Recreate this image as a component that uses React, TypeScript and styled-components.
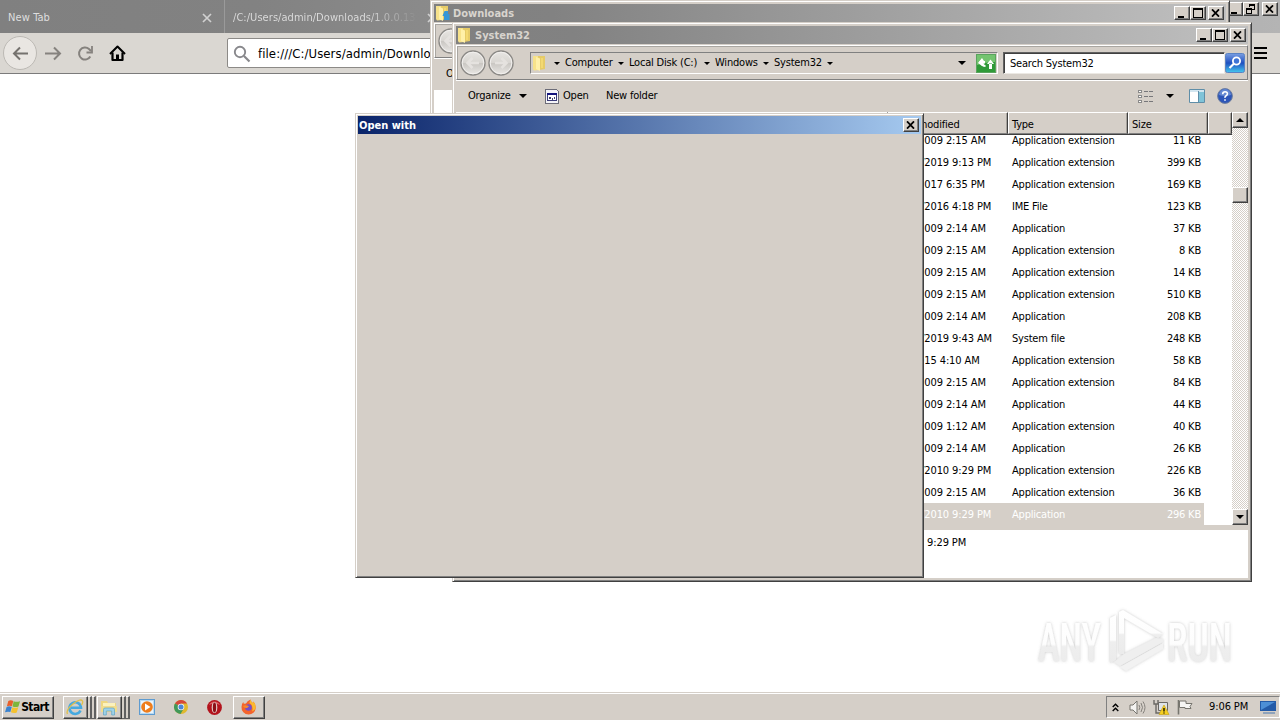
import { FC, ReactNode } from 'react';
import styled, { createGlobalStyle, css } from 'styled-components';

const face = '#d5cfc8';

const GlobalStyle = createGlobalStyle`
  * {
    box-sizing: border-box;
  }

  body {
    margin: 0;
    overflow: hidden;
    font-family: 'DejaVu Sans Condensed', 'DejaVu Sans', sans-serif;
    font-stretch: condensed;
    font-size: 11px;
    line-height: 14px;
    color: #000;
    background: #fff;
  }

  svg {
    display: block;
    flex: none;
  }
`;

const raised = css`
  border: 1px solid;
  border-color: #fff #404040 #404040 #fff;
  box-shadow: inset -1px -1px 0 #808080;
`;

const Desktop = styled.div`
  position: relative;
  display: flex;
  flex-direction: column;
  width: 1280px;
  height: 720px;
  overflow: hidden;
`;

const Label = styled.span<{ $w?: number; $ls?: number }>`
  flex: none;
  white-space: nowrap;
  width: ${({ $w }) => ($w ? `${$w}px` : 'auto')};
  letter-spacing: ${({ $ls = -0.2 }) => $ls}px;
`;

/* ---------- browser ---------- */

const TabStrip = styled.div`
  display: flex;
  height: 33px;
  flex: none;
  background: linear-gradient(90deg, #808080, #828282 20%, #b4b4b4);
`;

const Tab = styled.div<{ $w: number }>`
  display: flex;
  align-items: center;
  justify-content: space-between;
  width: ${({ $w }) => $w}px;
  padding: 2px 12px 0 8px;
  color: #dedede;
  border-right: 1px solid #9a9a9a;
`;

const FadedLabel = styled(Label)`
  color: transparent;
  background: linear-gradient(90deg, #dedede 72%, #8a8a8a 100%);
  background-clip: text;
`;

const BrowserButtons = styled.div`
  display: flex;
  margin-left: auto;
  padding: 2px 2px 0 0;
`;

const NavBar = styled.div`
  display: flex;
  align-items: center;
  height: 41px;
  flex: none;
  padding: 1px 11px 1px 3px;
  background: #dad7d2;
  border-bottom: 1px solid #7b7b7b;
`;

const BackCircle = styled.div`
  display: flex;
  align-items: center;
  justify-content: center;
  width: 34px;
  height: 34px;
  border: 1px solid #bcb9b4;
  border-radius: 50%;
  background: #e9e6e2;
`;

const NavIcons = styled.div`
  display: flex;
  align-items: center;
  gap: 15px;
  width: 190px;
  padding-left: 7px;
`;

const UrlBar = styled.div`
  display: flex;
  align-items: center;
  gap: 7px;
  width: 900px;
  height: 30px;
  padding: 1px 0 0 5px;
  border: 1px solid #8c8a87;
  border-radius: 2px;
  background: #fff;
  font-size: 13px;
`;

const NavEnd = styled.div`
  margin: 0 2px 0 auto;
`;

const Page = styled.div`
  flex: 1;
  display: flex;
  justify-content: flex-end;
  align-items: flex-end;
  padding: 0 34px 17px 0;
  background: #fff;
`;

/* ---------- windows ---------- */

const Frame = styled.div<{
  $x: number;
  $y: number;
  $w: number;
  $h: number;
  $pad: number;
}>`
  position: absolute;
  left: ${({ $x }) => $x}px;
  top: ${({ $y }) => $y}px;
  width: ${({ $w }) => $w}px;
  height: ${({ $h }) => $h}px;
  display: flex;
  flex-direction: column;
  padding: ${({ $pad }) => $pad}px;
  border: 1px solid;
  border-color: ${face} #404040 #404040 ${face};
  box-shadow: inset 1px 1px 0 #fff, inset -1px -1px 0 #808080;
  background: ${face};
  overflow: hidden;
`;

const TitleBar = styled.div<{ $active?: boolean }>`
  display: flex;
  align-items: center;
  height: 18px;
  flex: none;
  padding: 0 2px 0 1px;
  gap: 3px;
  font-weight: bold;
  color: ${({ $active }) => ($active ? '#fff' : '#d8d4ce')};
  background: ${({ $active }) =>
    $active
      ? 'linear-gradient(90deg, #0a246a, #a6caf0)'
      : 'linear-gradient(90deg, #808080, #828282 15%, #c0c0c0)'};
`;

const TitleText = styled(Label)`
  padding-top: 1px;
`;

const TitleButtons = styled.div`
  display: flex;
  margin-left: auto;
`;

const TitleButton = styled.div<{ $gap?: number }>`
  ${raised}
  display: flex;
  align-items: center;
  justify-content: center;
  width: 16px;
  height: 14px;
  margin-left: ${({ $gap = 0 }) => $gap}px;
  padding: 0 1px 1px 0;
  background: ${face};
`;

const Rebar = styled.div`
  display: flex;
  align-items: center;
  height: 35px;
  flex: none;
  margin-top: 1px;
  padding: 1px 1px 0 2px;
  border: 1px solid;
  border-color: #fff #808080 #808080 #fff;
  box-shadow: 0 1px 0 #fff, inset 1px 1px 0 #a9a6a1;
`;

const AddressField = styled.div`
  display: flex;
  align-items: center;
  width: 468px;
  height: 22px;
  margin-left: 15px;
  padding: 0 1px;
  border: 1px solid;
  border-color: #808080 #fff #fff #808080;
`;

const SearchField = styled.div`
  display: flex;
  align-items: center;
  width: 222px;
  height: 22px;
  margin-left: 5px;
  padding: 1px 0 0 6px;
  border: 1px solid;
  border-color: #606060 #ece9e4 #ece9e4 #606060;
  box-shadow: inset 1px 1px 0 #404040;
  background: #fff;
`;

const Arrow = styled.span<{ $m?: string; $size?: number }>`
  width: 0;
  height: 0;
  flex: none;
  margin: ${({ $m = '0' }) => $m};
  border: ${({ $size = 3 }) => $size}px solid transparent;
  border-top-color: #000;
  border-bottom: 0;
`;

const CommandBar = styled.div`
  display: flex;
  align-items: center;
  height: 32px;
  flex: none;
  padding: 0 15px 0 12px;
`;

const Pane = styled.div`
  flex: 1;
  background: #fff;
`;

const ListArea = styled.div`
  display: flex;
  height: 413px;
  flex: none;
`;

const ListView = styled.div`
  display: flex;
  flex-direction: column;
  width: 776px;
  background: #fff;
`;

const HeaderRow = styled.div`
  display: grid;
  grid-template-columns: 432px 120px 120px 80px 24px;
  height: 23px;
  flex: none;
  background: ${face};
  border-bottom: 1px solid #404040;
`;

const HeaderCell = styled.div`
  padding: 5px 0 0 3px;
  border: 1px solid;
  border-color: #fff #404040 #808080 #fff;
  box-shadow: inset -1px 0 0 #a5a19b;
`;

const Rows = styled.div`
  display: flex;
  flex-direction: column;
  justify-content: flex-end;
  flex: 1;
  min-height: 0;
  overflow: hidden;
`;

const Row = styled.div<{ $selected?: boolean }>`
  display: grid;
  grid-template-columns: 432px 119px 121px 76px;
  align-items: center;
  width: 748px;
  height: 22px;
  flex: none;
  color: ${({ $selected }) => ($selected ? '#fff' : '#000')};
  background: ${({ $selected }) => ($selected ? face : '#fff')};
`;

const Cell = styled.div<{ $right?: boolean; $ls?: number }>`
  padding: ${({ $right }) => ($right ? '1px 3px 0 0' : '1px 0 0 5px')};
  text-align: ${({ $right }) => ($right ? 'right' : 'left')};
  white-space: nowrap;
  letter-spacing: ${({ $ls = -0.2 }) => $ls}px;
`;

const ScrollBar = styled.div`
  display: flex;
  flex-direction: column;
  width: 16px;
  background: repeating-conic-gradient(#fff 0 25%, ${face} 0 50%) 0 0 / 2px 2px;
`;

const ScrollBox = styled.div<{ $m?: string }>`
  ${raised}
  display: flex;
  align-items: center;
  justify-content: center;
  height: 16px;
  margin: ${({ $m = '0' }) => $m};
  background: ${face};
`;

const ArrowUp = styled(Arrow)`
  transform: rotate(180deg);
`;

const Details = styled.div`
  flex: 1;
  margin-top: 5px;
  padding: 6px 0 0 471px;
  background: #fff;
`;

/* ---------- taskbar ---------- */

const TaskBar = styled.div`
  display: flex;
  align-items: center;
  height: 28px;
  flex: none;
  padding: 1px 0 0 2px;
  border-top: 1px solid ${face};
  box-shadow: inset 0 1px 0 #fff;
  background: ${face};
`;

const TaskButton = styled.div<{ $w: number; $m?: number }>`
  ${raised}
  display: flex;
  align-items: center;
  justify-content: center;
  width: ${({ $w }) => $w}px;
  height: 23px;
  margin-left: ${({ $m = 0 }) => $m}px;
  padding-right: 2px;
  font-size: 12px;
  font-weight: bold;
`;

const StackEdge = styled.div`
  width: 4px;
  height: 23px;
  border: solid;
  border-width: 1px 2px 1px 0;
  border-color: #fff #606060 #606060;
`;

const TaskIcon = styled.div<{ $m: number }>`
  display: flex;
  margin-left: ${({ $m }) => $m}px;
`;

const Tray = styled.div`
  display: flex;
  align-items: center;
  width: 174px;
  height: 22px;
  margin-left: auto;
  padding-left: 5px;
  border: 1px solid;
  border-color: #808080 #fff #fff #808080;
`;

/* ---------- icons ---------- */

const MinGlyph = () => (
  <svg width="10" height="10" viewBox="0 0 10 10">
    <path d="M1 8h6v2H1z" />
  </svg>
);

const MaxGlyph = () => (
  <svg width="10" height="10" viewBox="0 0 10 10" shapeRendering="crispEdges">
    <path d="M0 0h10v10H0zM1 2v7h8V2z" fillRule="evenodd" />
  </svg>
);

const RestoreGlyph = () => (
  <svg width="9" height="10" viewBox="0 0 9 10" shapeRendering="crispEdges">
    <path d="M3 0h6v6H6V5h2V2H4v1H3zM0 4h6v6H0zM1 6v3h4V6z" fillRule="evenodd" />
  </svg>
);

const CloseGlyph = () => (
  <svg width="9" height="8" viewBox="0 0 9 8">
    <path d="M1 .3l7 7.400M8 .3L1 7.700" stroke="#000" strokeWidth="1.700" />
  </svg>
);

const TabClose = () => (
  <svg width="10" height="10" viewBox="0 0 10 10">
    <path d="M1 1l8 8M9 1L1 9" stroke="#d0d0d0" strokeWidth="1.700" />
  </svg>
);

const Folder: FC<{ download?: boolean }> = ({ download }) => (
  <svg width="15" height="16" viewBox="0 0 15 16">
    <path d="M1 1h6v14l-5 .5L1 14z" fill="#f7e28a" />
    <path d="M6 1h7v13l-6 1z" fill="#e6cb68" />
    <path d="M4 2l4 1.500V16l-4-2z" fill="#fff0a8" />
    <path d="M9 3h2v10H9z" fill="#f3d972" />
    {download && <path d="M9.500 6h3.500v3h1.500v6H9v-4H7.500z" fill="#3597d6" />}
  </svg>
);

const RoundNav: FC<{ back?: boolean }> = ({ back }) => (
  <svg width="28" height="28" viewBox="0 0 28 28">
    <defs>
      <linearGradient id="knob" x1="0" y1="0" x2="0" y2="1">
        <stop offset="0" stopColor="#e9e7e4" />
        <stop offset=".48" stopColor="#d8d5d1" />
        <stop offset=".52" stopColor="#cac7c3" />
        <stop offset="1" stopColor="#eae8e5" />
      </linearGradient>
    </defs>
    <circle cx="14" cy="14" r="12" fill="url(#knob)" stroke="#8b8986" strokeWidth="1.400" />
    <circle cx="14" cy="14" r="10.800" fill="none" stroke="#f2f0ee" />
    <path
      d={back ? 'M20 14H9M13.500 9L8.500 14l5 5' : 'M8 14h11M14.500 9l5 5-5 5'}
      fill="none"
      stroke="#e5e2df"
      strokeWidth="2.600"
    />
  </svg>
);

const Refresh = () => (
  <svg width="20" height="19" viewBox="0 0 20 19">
    <rect x=".5" y=".5" width="19" height="18" fill="#2f9a38" stroke="#5aa35e" />
    <path d="M1 1h18v7Q10 8 1 11z" fill="#74c46f" />
    <path d="M2 9l4-4.500V7h3v2.500H6V12z" fill="#fff" />
    <path d="M2.500 8.500h6.500L6 4zM5 9h2.500q0 2 2 2v2Q5 13 5 9z" fill="#fff" />
    <path d="M11 10h7l-3.500-4.500zM13 9.500h3V15h-3z" fill="#fff" />
  </svg>
);

const SearchButton = () => (
  <svg width="20" height="20" viewBox="0 0 20 20">
    <defs>
      <linearGradient id="find" x1="0" y1="0" x2="0" y2="1">
        <stop offset="0" stopColor="#7a9fe2" />
        <stop offset=".5" stopColor="#1f4fc0" />
        <stop offset="1" stopColor="#45c8ee" />
      </linearGradient>
    </defs>
    <rect x=".5" y=".5" width="19" height="19" rx="2" fill="url(#find)" stroke="#5a82c4" />
    <circle cx="11.500" cy="8" r="3.600" fill="#3f74d6" stroke="#fff" strokeWidth="1.800" />
    <path d="M9 10.500l-4.500 4.500" stroke="#fff" strokeWidth="2.200" />
  </svg>
);

const OpenIcon = () => (
  <svg width="14" height="15" viewBox="0 0 14 15" shapeRendering="crispEdges">
    <path d="M.5.5h11l2 2v12H.5z" fill="#f4f4f8" stroke="#6c6c78" />
    <path d="M2.500 4.500h9v7h-9z" fill="#fff" stroke="#3b3b78" />
    <path d="M2 4h10v2H2z" fill="#14147c" />
    <path d="M4 8h2v2H4zM7 9h1v2H7zM9 8h1v2H9z" fill="#44446c" />
  </svg>
);

const ViewsIcon = () => (
  <svg width="16" height="13" viewBox="0 0 16 13">
    {[0, 5, 10].map((y) => (
      <g key={y}>
        <rect x=".5" y={y + 0.5} width="3" height="2" fill="#fff" stroke="#8a8a8a" />
        <path d={`M6 ${y + 1.5}h4M11 ${y + 1.5}h4`} stroke="#77777a" />
      </g>
    ))}
  </svg>
);

const PreviewIcon = () => (
  <svg width="16" height="14" viewBox="0 0 16 14">
    <path d="M.5.5h15v13H.5z" fill="#fff" stroke="#5f8ea8" />
    <path d="M1 1h14v2H1z" fill="#d3e6f0" />
    <path d="M10 3h5v10h-5z" fill="#7fc3d8" />
    <path d="M9.500 2v11" stroke="#5f8ea8" />
  </svg>
);

const HelpIcon = () => (
  <svg width="16" height="16" viewBox="0 0 16 16">
    <circle cx="8" cy="8" r="7.400" fill="#2c55b8" stroke="#6f7f9e" />
    <path d="M2 7a6 6 0 0 1 12 0Q8 9 2 7z" fill="#6488d2" />
    <path
      d="M5.700 6.200q0-2.400 2.400-2.400t2.300 2q0 1.300-1.300 2T8 9.800M8 11.200v1.600"
      fill="none"
      stroke="#fff"
      strokeWidth="1.600"
    />
  </svg>
);

const WindowsFlag = () => (
  <svg width="16" height="16" viewBox="0 0 17 16">
    <path d="M3.500 1.500Q6 0 8.800 1.500L7.400 7.300Q5 6 2 7.300z" fill="#e8602c" />
    <path d="M9.200 1.800Q12 3.300 16 1.800L14.300 7.400q-3 1.300-6.300 0z" fill="#7db63c" />
    <path d="M1.700 7.900Q4.500 6.600 7.200 8l-1.500 5.400Q3 12.400 0 13.600z" fill="#3a83d0" />
    <path d="M7.800 8.200q3 1.300 6.300 0l-1.600 5.600q-3 1.300-6.200-.1z" fill="#f5c22f" />
  </svg>
);

const IeIcon = () => (
  <svg width="18" height="17" viewBox="0 0 18 17">
    <path
      d="M14.500 11.500A5.800 5.800 0 1 1 15 8.800H5"
      fill="none"
      stroke="#46a9df"
      strokeWidth="2.600"
    />
    <path
      d="M1.500 15Q-.5 11 7 5t9.500-3q.8 1.500-1 4"
      fill="none"
      stroke="#e0c04a"
      strokeWidth="1.300"
    />
  </svg>
);

const ExplorerIcon = () => (
  <svg width="18" height="17" viewBox="0 0 18 17">
    <path d="M1 2h6l1 2h8v9H1z" fill="#eed680" />
    <path d="M3 4h12v6H3z" fill="#fbf1bd" />
    <path d="M1 7h16v6H1z" fill="#f1dc8c" />
    <path
      d="M3.500 16v-5.500q0-1.500 1.500-1.500h8q1.500 0 1.500 1.500V16h-2.800v-4H6.300v4z"
      fill="#9ed2e8"
      stroke="#5fa3c4"
      strokeWidth=".7"
    />
  </svg>
);

const PlayerIcon = () => (
  <svg width="16" height="16" viewBox="0 0 16 16">
    <rect x=".5" y=".5" width="15" height="15" fill="#b9daf2" stroke="#5e9bd0" />
    <rect x="2" y="2" width="12" height="12" fill="#e9f4fc" />
    <circle cx="8" cy="8" r="5.800" fill="#ee7d1c" />
    <path d="M6 4.600v6.800L11.500 8z" fill="#fff" />
  </svg>
);

const ChromeIcon = () => (
  <svg width="14" height="14" viewBox="0 0 14 14">
    <circle cx="7" cy="7" r="7" fill="#e0b92f" />
    <path d="M7 7L1 3.400A7 7 0 0 1 13 3.600H7z" fill="#d5473b" />
    <path d="M7 7L1 3.400A7 7 0 0 0 6.500 14L9.500 9z" fill="#41985a" />
    <circle cx="7" cy="7" r="3.300" fill="#f4f4f4" />
    <circle cx="7" cy="7" r="2.500" fill="#4a86d8" />
  </svg>
);

const OperaIcon = () => (
  <svg width="15" height="15" viewBox="0 0 15 15">
    <circle cx="7.500" cy="7.500" r="7.400" fill="#b3131c" />
    <path d="M2 5a6 6 0 0 1 11 0Q7.500 2 2 5z" fill="#dc5a5e" />
    <ellipse cx="7.500" cy="7.500" rx="2.800" ry="5.600" fill="#e8dcd8" />
    <ellipse cx="7.500" cy="7.500" rx="1.700" ry="5" fill="#8c1016" />
  </svg>
);

const FirefoxIcon = () => (
  <svg width="17" height="16" viewBox="0 0 17 16">
    <path
      d="M8.500 15.500A7 7 0 0 1 1.500 8q0-3 1.700-5l.6 1.800L6 4.500Q7 2 10.500.6 11 3 13 4l.4-1.400Q16 5 15.700 9a7 7 0 0 1-7.200 6.500z"
      fill="#f4642c"
    />
    <path
      d="M10.500.6Q11 3 13 4l.4-1.400Q16 5 15.700 9q-1.200 3-3.500 3.500Q13.500 6 9.300 4z"
      fill="#fbb92e"
    />
    <circle cx="8.500" cy="8.500" r="3.300" fill="#7450c8" />
    <path d="M3 7q3-1.500 6 .3L7 9Q4 9.500 3 7z" fill="#f98a2a" />
  </svg>
);

const TrayChevron = () => (
  <svg width="7" height="9" viewBox="0 0 7 9">
    <path
      d="M.7 4l2.800-2.800L6.300 4M.7 8l2.800-2.800L6.300 8"
      fill="none"
      stroke="#000"
      strokeWidth="1.400"
    />
  </svg>
);

const SpeakerIcon = () => (
  <svg width="17" height="15" viewBox="0 0 17 15">
    <path d="M1 5h3l4-4v13l-4-4H1z" fill="#f4f3f1" stroke="#77756f" />
    <path d="M10 5q1.500 2.500 0 5M12 3q3 4.500 0 9M14 1.500q4 6 0 12" fill="none" stroke="#85827d" />
  </svg>
);

const NetworkIcon = () => (
  <svg width="17" height="16" viewBox="0 0 17 16">
    <path d="M5.500 3.500h9v8h-9z" fill="#dfe3e8" stroke="#6a6864" />
    <path d="M1 1v4h4V1M3 5v9h4" fill="none" stroke="#6b6965" strokeWidth="1.400" />
    <path d="M11 6l5 9.500H6z" fill="#f6cf1f" stroke="#c9a51d" strokeWidth=".7" />
    <path d="M11 9v3.500M11 13.500v1" stroke="#000" strokeWidth="1.300" />
  </svg>
);

const FlagIcon = () => (
  <svg width="17" height="16" viewBox="0 0 17 16">
    <path d="M1.500 1v14.500" stroke="#77756f" strokeWidth="1.600" />
    <path d="M2.500 2h6.500v2.500h6L13 7.500l1 2H8V8.500H2.500z" fill="#f6f5f3" stroke="#77756f" />
  </svg>
);

const DesktopIcon = () => (
  <svg width="16" height="13" viewBox="0 0 16 13">
    <path d="M0 0h16v10H0z" fill="#245ba8" />
    <path d="M1 1h14L1 9z" fill="#4d8fd6" />
    <path d="M3 11h12v2H3z" fill="#8fa3bb" />
  </svg>
);

const Watermark = () => (
  <svg
    width="210"
    height="72"
    viewBox="0 0 210 72"
    fontFamily="Roboto, sans-serif"
    fontWeight="500"
    fontSize="53"
  >
    <defs>
      <linearGradient id="ink" x1="0" y1="0" x2="0" y2="1">
        <stop offset="0" stopColor="#fff" />
        <stop offset=".52" stopColor="#fdfdfd" />
        <stop offset=".56" stopColor="#eee" />
        <stop offset="1" stopColor="#ebebeb" />
      </linearGradient>
      <filter id="halo" x="-10%" y="-10%" width="120%" height="120%">
        <feDropShadow dx="0" dy="0" stdDeviation="1.500" floodColor="#777" floodOpacity=".42" />
      </filter>
    </defs>
    <g filter="url(#halo)" fill="url(#ink)">
      <text x="2" y="58" textLength="63" lengthAdjust="spacingAndGlyphs">
        ANY
      </text>
      <text x="131" y="58" textLength="65" lengthAdjust="spacingAndGlyphs">
        RUN
      </text>
      <path d="M74 15l6-3v45l-6 3z" />
      <path d="M83 9l4-2 40 24-5 4-34-20v36h-5z" />
      <path d="M88 51l32-16 7 1v3L84 63l-6-4z" fill="#efefef" />
      <path d="M84 64l43-24v6L90 68z" fill="#f2f2f2" />
    </g>
  </svg>
);

/* ---------- parts ---------- */

const WindowTitle: FC<{ active?: boolean; icon?: ReactNode; title: string }> = ({
  active,
  icon,
  title,
}) => {
  return (
    <TitleBar $active={active}>
      {icon}
      <TitleText $ls={0}>{title}</TitleText>
      <TitleButtons>
        {!active && (
          <>
            <TitleButton>
              <MinGlyph />
            </TitleButton>
            <TitleButton>
              <MaxGlyph />
            </TitleButton>
          </>
        )}
        <TitleButton $gap={2}>
          <CloseGlyph />
        </TitleButton>
      </TitleButtons>
    </TitleBar>
  );
};

const crumbs = [
  { name: 'Computer', width: 47 },
  { name: 'Local Disk (C:)', width: 69 },
  { name: 'Windows', width: 42 },
  { name: 'System32', width: 47 },
];

const CrumbItem: FC<{ name: string; width: number }> = ({ name, width }) => (
  <>
    <Label $w={width}>{name}</Label>
    <Arrow $m="0 5px 0 6px" />
  </>
);

const files = [
  ['7/14/2009 2:15 AM', 'Application extension', '11 KB'],
  ['10/16/2019 9:13 PM', 'Application extension', '399 KB'],
  ['8/16/2017 6:35 PM', 'Application extension', '169 KB'],
  ['10/11/2016 4:18 PM', 'IME File', '123 KB'],
  ['7/14/2009 2:14 AM', 'Application', '37 KB'],
  ['7/14/2009 2:15 AM', 'Application extension', '8 KB'],
  ['7/14/2009 2:15 AM', 'Application extension', '14 KB'],
  ['7/14/2009 2:15 AM', 'Application extension', '510 KB'],
  ['7/14/2009 2:14 AM', 'Application', '208 KB'],
  ['10/16/2019 9:43 AM', 'System file', '248 KB'],
  ['7/9/2015 4:10 AM', 'Application extension', '58 KB'],
  ['7/14/2009 2:15 AM', 'Application extension', '84 KB'],
  ['7/14/2009 2:14 AM', 'Application', '44 KB'],
  ['7/14/2009 1:12 AM', 'Application extension', '40 KB'],
  ['7/14/2009 2:14 AM', 'Application', '26 KB'],
  ['11/20/2010 9:29 PM', 'Application extension', '226 KB'],
  ['7/14/2009 2:15 AM', 'Application extension', '36 KB'],
  ['11/20/2010 9:29 PM', 'Application', '296 KB'],
];

const Browser = () => {
  return (
    <>
      <TabStrip>
        <Tab $w={225}>
          <Label $ls={0.1}>New Tab</Label>
          <TabClose />
        </Tab>
        <Tab $w={225}>
          <FadedLabel $w={184} $ls={0.05}>
            /C:/Users/admin/Downloads/1.0.0.13
          </FadedLabel>
          <TabClose />
        </Tab>
        <BrowserButtons>
          <TitleButton>
            <MinGlyph />
          </TitleButton>
          <TitleButton>
            <RestoreGlyph />
          </TitleButton>
          <TitleButton $gap={3}>
            <CloseGlyph />
          </TitleButton>
        </BrowserButtons>
      </TabStrip>
      <NavBar>
        <BackCircle>
          <svg width="17" height="15" viewBox="0 0 17 15">
            <path d="M16 7.500H2M8 1.500l-6 6 6 6" fill="none" stroke="#75726e" strokeWidth="2" />
          </svg>
        </BackCircle>
        <NavIcons>
          <svg width="18" height="15" viewBox="0 0 18 15">
            <path d="M1 7.500h14M10 1.500l6 6-6 6" fill="none" stroke="#85827e" strokeWidth="2" />
          </svg>
          <svg width="17" height="17" viewBox="0 0 17 17">
            <path d="M13.300 11.500A6 6 0 1 1 12 4l2 2" fill="none" stroke="#85827e" strokeWidth="2" />
            <path d="M15 1v6.500H9.500" fill="none" stroke="#85827e" strokeWidth="1.800" />
          </svg>
          <svg width="17" height="17" viewBox="0 0 17 17">
            <path
              d="M1 9L8.500 1.500 16 9"
              fill="none"
              stroke="#000"
              strokeWidth="2"
              strokeLinejoin="round"
            />
            <path
              d="M3.500 7.500V15h10V7.500"
              fill="none"
              stroke="#000"
              strokeWidth="2.200"
              strokeLinejoin="round"
            />
            <path d="M7 9.500h3V15H7z" />
          </svg>
        </NavIcons>
        <UrlBar>
          <svg width="18" height="18" viewBox="0 0 18 18">
            <circle cx="7" cy="7" r="5.200" fill="none" stroke="#88888c" strokeWidth="1.900" />
            <path d="M11 11l5.500 5.500" stroke="#88888c" strokeWidth="2.200" />
          </svg>
          <Label $ls={0.08}>file:///C:/Users/admin/Downloads/1.0.0.13</Label>
        </UrlBar>
        <NavEnd>
          <svg width="13" height="12" viewBox="0 0 13 12">
            <path d="M0 1h13M0 6h13M0 11h13" stroke="#000" strokeWidth="2" />
          </svg>
        </NavEnd>
      </NavBar>
      <Page>
        <Watermark />
      </Page>
    </>
  );
};

const DownloadsWindow = () => {
  return (
    <Frame $x={430} $y={0} $w={800} $h={560} $pad={3}>
      <WindowTitle icon={<Folder download />} title="Downloads" />
      <Rebar>
        <RoundNav back />
      </Rebar>
      <CommandBar>
        <Label>Organize</Label>
      </CommandBar>
      <Pane />
    </Frame>
  );
};

const SearchEnd = styled.div`
  margin-left: 0;
`;

const CommandLabel = styled(Label)`
  margin-left: 4px;
`;

const CommandEnd = styled.div`
  display: flex;
  align-items: center;
  margin-left: auto;

  svg:last-child {
    margin-left: 12px;
  }
`;

const SystemWindow = () => {
  return (
    <Frame $x={452} $y={22} $w={800} $h={560} $pad={3}>
      <WindowTitle icon={<Folder />} title="System32" />
      <Rebar>
        <RoundNav back />
        <RoundNav />
        <AddressField>
          <Folder />
          <Arrow $m="0 5px 0 7px" />
          {crumbs.map(({ name, width }) => (
            <CrumbItem key={name} name={name} width={width} />
          ))}
          <Arrow $size={4} $m="0 10px 0 auto" />
          <Refresh />
        </AddressField>
        <SearchField>
          <Label>Search System32</Label>
        </SearchField>
        <SearchEnd>
          <SearchButton />
        </SearchEnd>
      </Rebar>
      <CommandBar>
        <Label $w={51}>Organize</Label>
        <Arrow $size={4} $m="0 18px 0 0" />
        <OpenIcon />
        <CommandLabel $w={43}>Open</CommandLabel>
        <Label>New folder</Label>
        <CommandEnd>
          <ViewsIcon />
          <Arrow $size={4} $m="0 15px 0 12px" />
          <PreviewIcon />
          <HelpIcon />
        </CommandEnd>
      </CommandBar>
      <ListArea>
        <ListView>
          <HeaderRow>
            <HeaderCell />
            <HeaderCell>
              <Label>Date modified</Label>
            </HeaderCell>
            <HeaderCell>
              <Label>Type</Label>
            </HeaderCell>
            <HeaderCell>
              <Label>Size</Label>
            </HeaderCell>
            <HeaderCell />
          </HeaderRow>
          <Rows>
            {files.map(([date, type, size], i) => (
              <Row key={i} $selected={i === files.length - 1}>
                <Cell />
                <Cell $ls={-0.1}>{date}</Cell>
                <Cell>{type}</Cell>
                <Cell $right>{size}</Cell>
              </Row>
            ))}
          </Rows>
        </ListView>
        <ScrollBar>
          <ScrollBox>
            <ArrowUp $size={4} />
          </ScrollBox>
          <ScrollBox $m="59px 0 auto" />
          <ScrollBox>
            <Arrow $size={4} />
          </ScrollBox>
        </ScrollBar>
      </ListArea>
      <Details>
        <Label $ls={-0.1}>9:29 PM</Label>
      </Details>
    </Frame>
  );
};

const App = () => {
  return (
    <Desktop>
      <GlobalStyle />
      <Browser />
      <TaskBar>
        <TaskButton $w={52}>
          <WindowsFlag />
          <Label $ls={-0.6}>Start</Label>
        </TaskButton>
        <TaskButton $w={25} $m={9}>
          <IeIcon />
        </TaskButton>
        <StackEdge />
        <StackEdge />
        <TaskButton $w={25} $m={1}>
          <ExplorerIcon />
        </TaskButton>
        <StackEdge />
        <StackEdge />
        <TaskIcon $m={9}>
          <PlayerIcon />
        </TaskIcon>
        <TaskIcon $m={19}>
          <ChromeIcon />
        </TaskIcon>
        <TaskIcon $m={19}>
          <OperaIcon />
        </TaskIcon>
        <TaskButton $w={32} $m={11}>
          <FirefoxIcon />
        </TaskButton>
        <Tray>
          <TrayChevron />
          <TaskIcon $m={10}>
            <SpeakerIcon />
          </TaskIcon>
          <TaskIcon $m={7}>
            <NetworkIcon />
          </TaskIcon>
          <TaskIcon $m={7}>
            <FlagIcon />
          </TaskIcon>
          <TaskIcon $m={15}>
            <Label $w={51} $ls={-0.1}>
              9:06 PM
            </Label>
          </TaskIcon>
          <DesktopIcon />
        </Tray>
      </TaskBar>
      <DownloadsWindow />
      <SystemWindow />
      <Frame $x={355} $y={113} $w={569} $h={465} $pad={2}>
        <WindowTitle active title="Open with" />
      </Frame>
    </Desktop>
  );
};

export default App;
